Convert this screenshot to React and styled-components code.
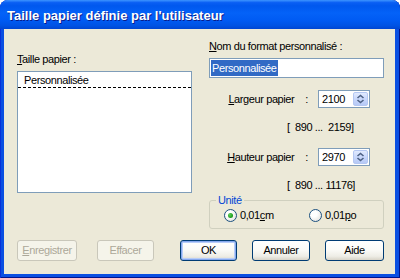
import React from 'react';
import styled, { createGlobalStyle } from 'styled-components';

const GlobalStyle = createGlobalStyle`
  html, body {
    margin: 0;
    padding: 0;
    background: #ffffff;
  }

  body {
    font-family: "Liberation Sans", Arial, sans-serif;
    font-size: 11px;
    letter-spacing: -0.4px;
    color: #000000;
  }
`;

const Window = styled.div`
  width: 400px;
  height: 278px;
  display: flex;
  flex-direction: column;
  box-sizing: border-box;
  background: #0a4fe2;
  border-radius: 8px 8px 0 0;
  overflow: hidden;
  box-shadow: inset 1px 0 #0831d9, inset -1px 0 #00138c, inset 0 -1px #00138c;
`;

const TitleBar = styled.div`
  flex: 0 0 29px;
  display: flex;
  align-items: center;
  padding: 1px 0 0 7px;
  box-sizing: border-box;
  background: linear-gradient(
    180deg,
    #3d95ff 0%,
    #0a5ff4 9%,
    #0058ee 20%,
    #0462f8 45%,
    #005bf3 70%,
    #0053e4 88%,
    #0046d2 100%
  );
  color: #ffffff;
  font: bold 13px "Liberation Sans", Arial, sans-serif;
  letter-spacing: 0;
  text-shadow: 1px 1px 0 #0a1c8a;
`;

const Client = styled.div`
  flex: 1;
  margin: 0 5px 4px 4px;
  padding: 0 11px 0 13px;
  background: #ece9d8;
  display: flex;
  flex-direction: column;
`;

const Body = styled.div`
  display: flex;
  align-items: flex-start;
  gap: 17px;
`;

const LeftCol = styled.div`
  width: 175px;
  margin-top: 24px;
  display: flex;
  flex-direction: column;
  gap: 5px;
`;

const RightCol = styled.div`
  width: 175px;
  margin-top: 11px;
  display: flex;
  flex-direction: column;
`;

const Label = styled.div`
  line-height: 13px;
  white-space: nowrap;
`;

const Key = styled.span`
  text-decoration: underline;
  text-underline-offset: 1px;
`;

const ListBox = styled.div`
  height: 122px;
  box-sizing: border-box;
  border: 1px solid #7f9db9;
  background: #ffffff;
`;

const ListItem = styled.div`
  padding: 2px 0 0 6px;
  line-height: 13px;
  border-bottom: 1px dashed #000000;
`;

const TextInput = styled.div`
  margin-top: 5px;
  height: 20px;
  box-sizing: border-box;
  border: 1px solid #7f9db9;
  background: #ffffff;
  padding: 1px;
  display: flex;
`;

const Selected = styled.span`
  background: #316ac5;
  color: #ffffff;
  padding: 0 1px;
  line-height: 16px;
`;

const FieldRow = styled.div`
  margin-top: ${p => p.$top}px;
  height: 18px;
  display: flex;
  align-items: center;
  justify-content: flex-end;
  padding-right: 14px;
  line-height: 13px;
`;

const Colon = styled.span`
  margin: 0 10px 0 11px;
`;

const SpinBox = styled.div`
  width: 52px;
  height: 18px;
  box-sizing: border-box;
  border: 1px solid #7f9db9;
  background: #ffffff;
  display: flex;
  align-items: center;
  padding: 0 1px 0 3px;
`;

const SpinValue = styled.span`
  flex: 1;
`;

const SpinButton = styled.div`
  width: 15px;
  height: 14px;
  box-sizing: border-box;
  border: 1px solid #b4c7f2;
  border-radius: 2px;
  background: linear-gradient(180deg, #e1eafe 0%, #c8d7fb 50%, #b6c9f6 100%);
  display: flex;
  align-items: center;
  justify-content: center;
`;

const Range = styled.div`
  margin-top: 13px;
  padding-left: 78px;
  line-height: 13px;
  white-space: pre;
`;

const Group = styled.fieldset`
  margin: 2px 0 0 0;
  padding: 0 6px 5px 6px;
  border: 1px solid #d0d0bf;
  border-radius: 3px;
  min-width: 0;
`;

const Legend = styled.legend`
  padding: 0 2px;
  color: #0046d5;
  line-height: 13px;
`;

const RadioRow = styled.div`
  display: grid;
  grid-template-columns: 85px auto;
  height: 16px;
  align-items: center;
  margin-left: 8px;
`;

const Option = styled.label`
  display: flex;
  align-items: center;
  gap: 3px;
  line-height: 13px;
`;

const RadioCircle = styled.span`
  width: 13px;
  height: 13px;
  box-sizing: border-box;
  border-radius: 50%;
  border: 1px solid #1c5180;
  background: radial-gradient(circle at 35% 35%, #ffffff 30%, #dcdad5 100%);
  display: flex;
  align-items: center;
  justify-content: center;

  &::after {
    content: '';
    display: ${p => (p.$checked ? 'block' : 'none')};
    width: 5px;
    height: 5px;
    border-radius: 50%;
    background: radial-gradient(circle at 35% 35%, #5ed05a 0%, #21a121 60%, #1a7d1a 100%);
  }
`;

const ButtonRow = styled.div`
  margin-top: 11px;
  display: flex;
  align-items: center;
`;

const ButtonGroup = styled.div`
  display: flex;
  gap: ${p => p.$gap}px;
  margin-left: ${p => (p.$end ? 'auto' : '0')};
`;

const Button = styled.div`
  width: ${p => p.$w}px;
  height: 21px;
  box-sizing: border-box;
  border: 1px solid ${p => (p.$disabled ? '#c9c7ba' : '#003c74')};
  border-radius: 3px;
  background: ${p =>
    p.$disabled
      ? '#f5f4ea'
      : 'linear-gradient(180deg, #ffffff 0%, #fbfbf8 45%, #eeede6 80%, #d8d4c8 100%)'};
  color: ${p => (p.$disabled ? '#aca899' : '#000000')};
  box-shadow: ${p =>
    p.$default ? 'inset 0 0 0 1px #86a8ee, inset 0 0 0 2px #b8cdf8' : 'none'};
  display: flex;
  align-items: center;
  justify-content: center;
  line-height: 13px;
`;

const SpinArrows = () => (
  <svg width="9" height="10" viewBox="0 0 9 10">
    <path d="M1.5 4 L4.5 1.5 L7.5 4" fill="none" stroke="#4d6185" strokeWidth="1.6" />
    <path d="M1.5 6 L4.5 8.5 L7.5 6" fill="none" stroke="#4d6185" strokeWidth="1.6" />
  </svg>
);

const Spin = ({ value }) => (
  <SpinBox>
    <SpinValue>{value}</SpinValue>
    <SpinButton>
      <SpinArrows />
    </SpinButton>
  </SpinBox>
);

export default function App() {
  return (
    <>
      <GlobalStyle />
      <Window>
        <TitleBar>Taille papier définie par l'utilisateur</TitleBar>
        <Client>
          <Body>
            <LeftCol>
              <Label><Key>T</Key>aille papier :</Label>
              <ListBox>
                <ListItem>Personnalisée</ListItem>
              </ListBox>
            </LeftCol>
            <RightCol>
              <Label><Key>N</Key>om du format personnalisé :</Label>
              <TextInput>
                <Selected>Personnalisée</Selected>
              </TextInput>
              <FieldRow $top={12}>
                <span><Key>L</Key>argeur papier</span>
                <Colon>:</Colon>
                <Spin value="2100" />
              </FieldRow>
              <Range>{'[  890 ...  2159]'}</Range>
              <FieldRow $top={14}>
                <span><Key>H</Key>auteur papier</span>
                <Colon>:</Colon>
                <Spin value="2970" />
              </FieldRow>
              <Range>{'[  890 ... 11176]'}</Range>
              <Group>
                <Legend>Unité</Legend>
                <RadioRow>
                  <Option>
                    <RadioCircle $checked />
                    <span>0,01<Key>c</Key>m</span>
                  </Option>
                  <Option>
                    <RadioCircle />
                    <span>0,01<Key>p</Key>o</span>
                  </Option>
                </RadioRow>
              </Group>
            </RightCol>
          </Body>
          <ButtonRow>
            <ButtonGroup $gap={20}>
              <Button $w={60} $disabled><span><Key>E</Key>nregistrer</span></Button>
              <Button $w={57} $disabled>Effacer</Button>
            </ButtonGroup>
            <ButtonGroup $gap={15} $end>
              <Button $w={57} $default>OK</Button>
              <Button $w={58}>Annuler</Button>
              <Button $w={59}>Aide</Button>
            </ButtonGroup>
          </ButtonRow>
        </Client>
      </Window>
    </>
  );
}
